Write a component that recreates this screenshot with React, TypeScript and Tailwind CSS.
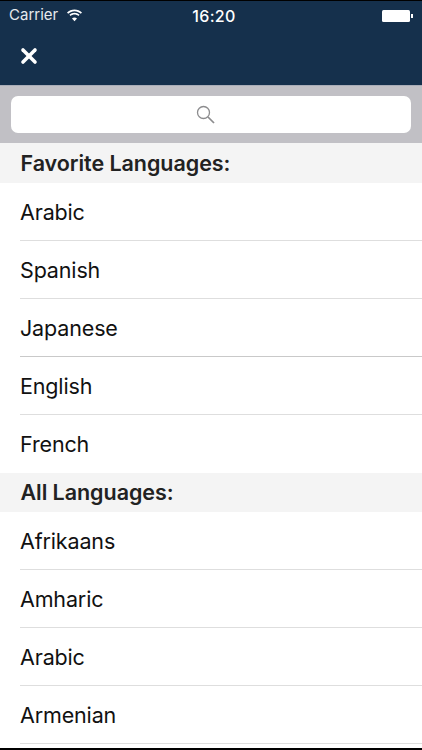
import { X } from "lucide-react";

const favorites = ["Arabic", "Spanish", "Japanese", "English", "French"];
const allLanguages = ["Afrikaans", "Amharic", "Arabic", "Armenian"];

function SectionHeader({ label, height }: { label: string; height: string }) {
  return (
    <div className={`flex items-center bg-[#f4f4f4] pl-[20.5px] text-[21.5px] font-semibold tracking-[-0.05px] text-[#222222] ${height}`}>
      {label}
    </div>
  );
}

function LanguageRow({ label, last, dark }: { label: string; last?: boolean; dark?: boolean }) {
  return (
    <div className="h-[58px] pl-[20px]">
      <div
        className={`flex h-full items-center pt-px text-[21.5px] tracking-[-0.15px] text-[#111111] ${last ? "" : "border-b"} ${
          dark ? "border-[#c9c9c9]" : "border-[#dedede]"
        }`}
      >
        {label}
      </div>
    </div>
  );
}

export default function App() {
  return (
    <div className="flex h-[750px] w-[422px] flex-col overflow-hidden bg-white font-['Inter',sans-serif]">
      <div className="h-px bg-black" />

      {/* Status bar + nav */}
      <div className="h-[84px] bg-[#15304c] text-white">
        <div className="flex h-[29px] items-center justify-between pl-[9px] pr-[9px]">
          <div className="flex w-[140px] items-center gap-[8px] text-[15px] text-[#e6eaee]">
            Carrier
            <svg width="17" height="13" viewBox="0 0 17 13" fill="white">
              <path d="M8.5 2.2c2.4 0 4.6.9 6.3 2.5l1.2-1.3C14 1.5 11.4.4 8.5.4S3 1.5 1 3.4l1.2 1.3c1.7-1.6 3.9-2.5 6.3-2.5z" />
              <path d="M8.5 5.6c1.5 0 2.8.5 3.9 1.5l1.2-1.3c-1.4-1.3-3.2-2-5.1-2s-3.7.7-5.1 2l1.2 1.3c1.1-1 2.4-1.5 3.9-1.5z" />
              <path d="M8.5 8.4c-.9 0-1.8.4-2.5 1l2.5 2.9 2.5-2.9c-.7-.6-1.6-1-2.5-1z" />
            </svg>
          </div>
          <div className="pl-[6px] text-[16px] font-medium tracking-[0.3px]">16:20</div>
          <div className="flex w-[140px] items-center justify-end">
            <div className="h-[12px] w-[28px] rounded-[1.5px] bg-white" />
            <div className="ml-px h-[4px] w-[1.5px] bg-white" />
          </div>
        </div>
        <div className="pl-[17px] pt-[14px]">
          <X size={24} strokeWidth={3.6} color="white" />
        </div>
      </div>

      {/* Search */}
      <div className="h-[58px] border-t border-[#a9adb8] bg-[#c1c0c5] px-[11px] pt-[10px]">
        <div className="flex h-[37px] items-center justify-center rounded-[7px] bg-white">
          <svg className="mr-[11px]" width="19" height="19" viewBox="0 0 19 19" fill="none" stroke="#8c8c8e" strokeWidth="1.3">
            <circle cx="7.5" cy="7.5" r="6" />
            <path d="M12 12l6 6" strokeWidth="1.7" />
          </svg>
        </div>
      </div>

      <SectionHeader label="Favorite Languages:" height="h-[40px]" />
      {favorites.map((name, i) => (
        <LanguageRow key={name} label={name} last={i === favorites.length - 1} dark={name === "Japanese"} />
      ))}

      <SectionHeader label="All Languages:" height="h-[39px]" />
      {allLanguages.map((name) => (
        <LanguageRow key={name} label={name} />
      ))}

      <div className="mt-[4px] h-[2px] bg-black" />
    </div>
  );
}
